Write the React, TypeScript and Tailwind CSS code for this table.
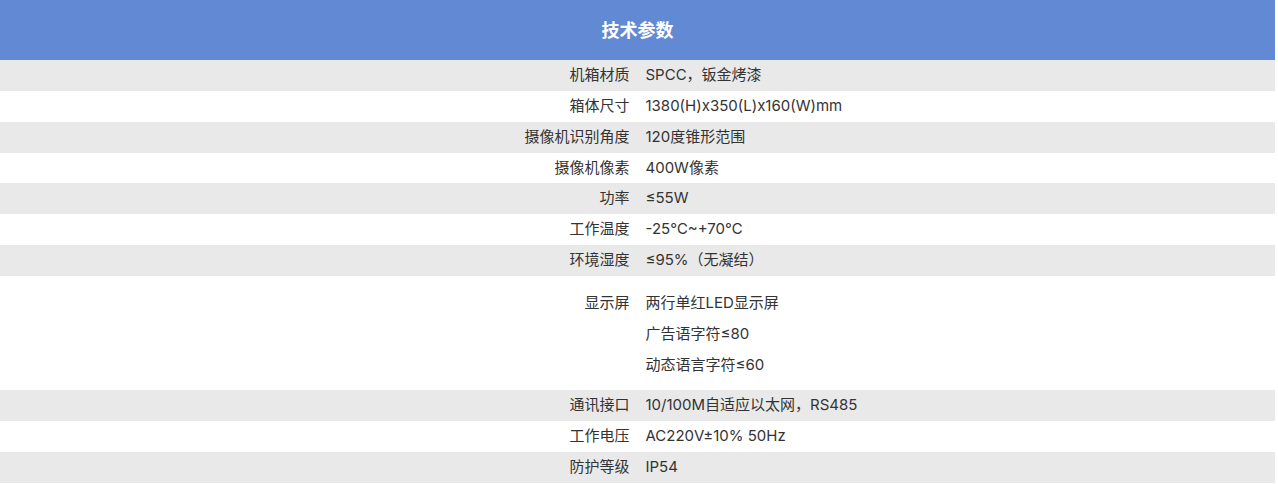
import React from "react";

const rows: { label: string; values: string[] }[] = [
  { label: "机箱材质", values: ["SPCC，钣金烤漆"] },
  { label: "箱体尺寸", values: ["1380(H)x350(L)x160(W)mm"] },
  { label: "摄像机识别角度", values: ["120度锥形范围"] },
  { label: "摄像机像素", values: ["400W像素"] },
  { label: "功率", values: ["≤55W"] },
  { label: "工作温度", values: ["-25℃~+70℃"] },
  { label: "环境湿度", values: ["≤95%（无凝结）"] },
  { label: "显示屏", values: ["两行单红LED显示屏", "广告语字符≤80", "动态语言字符≤60"] },
  { label: "通讯接口", values: ["10/100M自适应以太网，RS485"] },
  { label: "工作电压", values: ["AC220V±10% 50Hz"] },
  { label: "防护等级", values: ["IP54"] },
];

export default function App() {
  return (
    <div
      className="w-[1275px] bg-white text-[15px] text-[#333]"
      style={{ fontFamily: 'Inter, "Noto Sans CJK SC", sans-serif' }}
    >
      <div className="h-[60px] bg-[#6289d3] flex items-center justify-center text-white text-[18px] font-bold">
        技术参数
      </div>
      {rows.map((r, i) => {
        const multi = r.values.length > 1;
        return (
          <div
            key={i}
            className={`flex ${i % 2 === 0 ? "bg-[#e9e9e9]" : "bg-white"} ${multi ? "py-[10.5px]" : ""}`}
          >
            <div className={`w-1/2 pr-[8px] text-right ${multi ? "leading-[31px]" : "leading-[30.86px]"}`}>
              {r.label}
            </div>
            <div className="w-1/2 pl-[8px] flex flex-col">
              {r.values.map((v, j) => (
                <div key={j} className={multi ? "leading-[31px]" : "leading-[30.86px]"}>
                  {v}
                </div>
              ))}
            </div>
          </div>
        );
      })}
    </div>
  );
}
